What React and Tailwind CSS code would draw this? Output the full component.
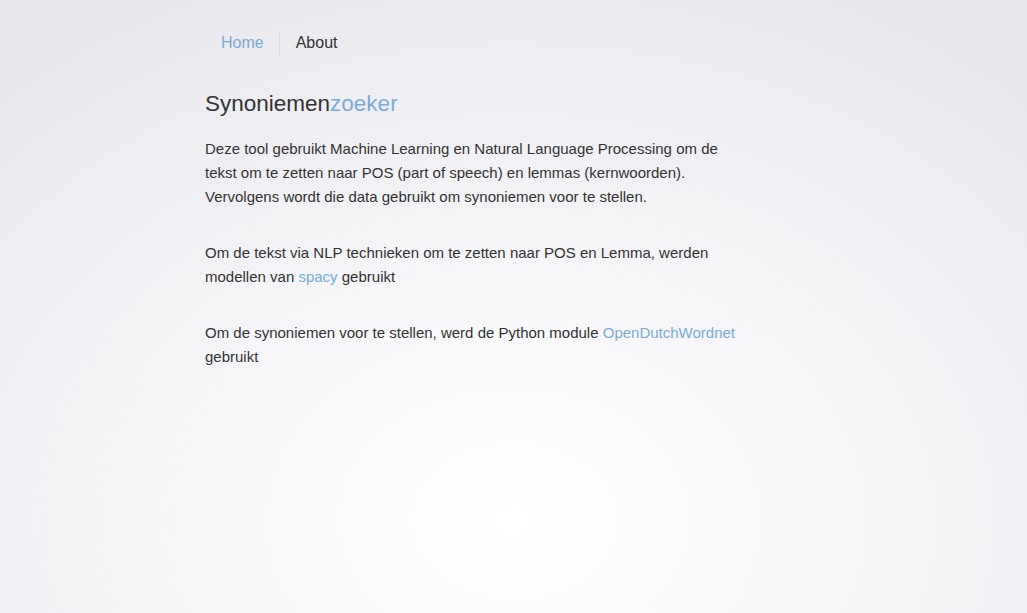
export default function App() {
  return (
    <div
      className="min-h-[613px] w-full bg-[radial-gradient(ellipse_75%_95%_at_50%_85%,#ffffff_0%,#f7f7f9_40%,#e8e8ee_100%)] text-[#333333]"
      style={{ fontFamily: '"Liberation Sans", Arial, sans-serif' }}
    >
      <div className="ml-[205px] w-[540px]">
        <nav className="flex pt-[31px]">
          <a className="flex h-6 items-center border-r border-[#dcdce0] pl-4 pr-[15px] text-[16px] text-[#79acd3]">Home</a>
          <a className="flex h-6 items-center px-4 text-[16px] text-[#333333]">About</a>
        </nav>
        <h1 className="mt-[33px] text-[22.5px] leading-8">
          Synoniemen<span className="text-[#79acd3]">zoeker</span>
        </h1>
        <p className="mt-[17px] text-[15px] leading-6">
          Deze tool gebruikt Machine Learning en Natural Language Processing om de tekst om te zetten naar POS (part of speech) en lemmas (kernwoorden). Vervolgens wordt die data gebruikt om synoniemen voor te stellen.
        </p>
        <p className="mt-8 text-[15px] leading-6">
          Om de tekst via NLP technieken om te zetten naar POS en Lemma, werden modellen van <a className="text-[#79acd3]">spacy</a> gebruikt
        </p>
        <p className="mt-8 text-[15px] leading-6">
          Om de synoniemen voor te stellen, werd de Python module <a className="text-[#79acd3]">OpenDutchWordnet</a> gebruikt
        </p>
      </div>
    </div>
  );
}
